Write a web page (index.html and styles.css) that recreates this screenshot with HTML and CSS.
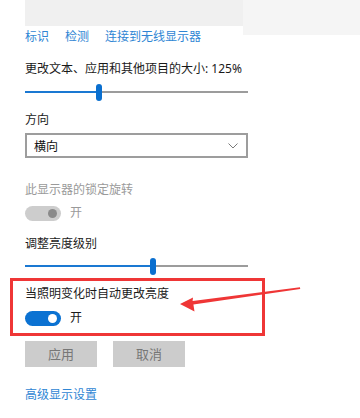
FILE: index.html
```html
<!DOCTYPE html>
<html lang="zh-CN">
<head>
<meta charset="utf-8">
<link rel="stylesheet" href="styles.css">
</head>
<body>
<div class="header">
  <div class="head-left">
    <div class="grey-a"></div>
    <div class="links">
      <span class="link">标识</span>
      <span class="link">检测</span>
      <span class="link">连接到无线显示器</span>
    </div>
  </div>
  <div class="grey-b"></div>
</div>

<div class="content">
  <div class="label l-size">更改文本、应用和其他项目的大小: 125%</div>
  <div class="slider s1">
    <div class="fill" style="width:71px"></div>
    <div class="thumb"></div>
    <div class="rest"></div>
  </div>

  <div class="label l-orient">方向</div>
  <div class="select">
    <span>横向</span>
    <svg class="chev" width="10" height="6" viewBox="0 0 10 6"><path d="M0.5 0.5 L5 5 L9.5 0.5" fill="none" stroke="#7a7a7a" stroke-width="1"/></svg>
  </div>

  <div class="label disabled l-lock">此显示器的锁定旋转</div>
  <div class="toggle-row t-lock">
    <div class="toggle off"><div class="knob"></div></div>
    <span class="tlabel disabled">开</span>
  </div>

  <div class="label l-bright">调整亮度级别</div>
  <div class="slider s2">
    <div class="fill" style="width:125px"></div>
    <div class="thumb"></div>
    <div class="rest"></div>
  </div>

  <div class="highlight">
    <div class="label l-auto">当照明变化时自动更改亮度</div>
    <div class="toggle-row t-auto">
      <div class="toggle on"><div class="knob"></div></div>
      <span class="tlabel">开</span>
    </div>
  </div>

  <div class="buttons">
    <div class="btn">应用</div>
    <div class="btn">取消</div>
  </div>

  <div class="label link adv">高级显示设置</div>
</div>

<svg class="arrow" width="360" height="418" viewBox="0 0 360 418">
  <polygon points="180,304 193,297.5 192.6,301 300,287.2 300.2,288.9 193.4,304.6 194.5,311.5" fill="#ef3636"/>
</svg>
</body>
</html>
```

FILE: styles.css
```css
html, body {
  margin: 0;
  padding: 0;
  background: #ffffff;
  width: 360px;
  height: 418px;
  overflow: hidden;
}
body {
  position: relative;
  font-family: "Noto Sans", "Noto Sans CJK SC", sans-serif;
  font-size: 12px;
  color: #1a1a1a;
}
.header {
  display: flex;
  align-items: flex-start;
}
.head-left {
  margin-left: 25px;
  width: 218px;
}
.grey-a {
  height: 26px;
  background: #f0f0f0;
}
.grey-b {
  flex: 1;
  height: 35px;
  background: #f5f5f5;
}
.links {
  margin-top: 2px;
  height: 17px;
  line-height: 17px;
  display: flex;
  gap: 16px;
  white-space: nowrap;
}
.link {
  color: #2f86d4;
}
.content {
  padding-left: 25px;
  width: 223px;
}
.label {
  height: 17px;
  line-height: 17px;
  white-space: nowrap;
}
.disabled {
  color: #9a9a9a;
}
.l-size { margin-top: 15px; }
.slider {
  height: 20px;
  display: flex;
  align-items: center;
}
.s1 { margin-top: 5px; }
.s2 { margin-top: 4px; }
.fill {
  height: 2px;
  background: #1a78d2;
}
.thumb {
  width: 6px;
  height: 17px;
  border-radius: 3px;
  background: #0a6fcf;
}
.rest {
  flex: 1;
  height: 2px;
  background: #9c9c9c;
}
.l-orient { margin-top: 9px; }
.select {
  margin-top: 5px;
  height: 25px;
  box-sizing: border-box;
  border: 2px solid #9d9d9d;
  display: flex;
  align-items: center;
  justify-content: space-between;
  padding: 0 7px 0 7px;
  color: #111;
}
.chev { margin-right: 1px; margin-top: 1px; }
.l-lock { margin-top: 23px; }
.toggle-row {
  height: 16px;
  display: flex;
  align-items: center;
  gap: 9px;
}
.t-lock { margin-top: 7px; }
.toggle {
  width: 36px;
  height: 15px;
  box-sizing: border-box;
  border-radius: 8px;
  display: flex;
  align-items: center;
  justify-content: flex-end;
  padding-right: 4px;
}
.knob {
  width: 9px;
  height: 9px;
  border-radius: 50%;
}
.toggle.off { background: #cdcdcd; }
.toggle.off .knob { background: #8a8a8a; }
.toggle.on { background: #0b72d2; }
.toggle.on .knob { background: #ffffff; }
.tlabel {
  line-height: 16px;
}
.l-bright { margin-top: 14px; }
.highlight {
  margin-top: 2px;
  margin-left: -15px;
  width: 255px;
  height: 58px;
  box-sizing: border-box;
  border: 3px solid #ef3636;
  padding: 4px 0 0 12px;
}
.l-auto { margin-top: 0; }
.t-auto { margin-top: 8px; }
.buttons {
  margin-top: 5px;
  display: flex;
  gap: 16px;
}
.btn {
  width: 72px;
  height: 26px;
  line-height: 26px;
  text-align: center;
  background: #cccccc;
  color: #777777;
  font-size: 13px;
}
.adv { margin-top: 19px; }
.arrow {
  position: absolute;
  left: 0;
  top: 0;
  pointer-events: none;
}
```
